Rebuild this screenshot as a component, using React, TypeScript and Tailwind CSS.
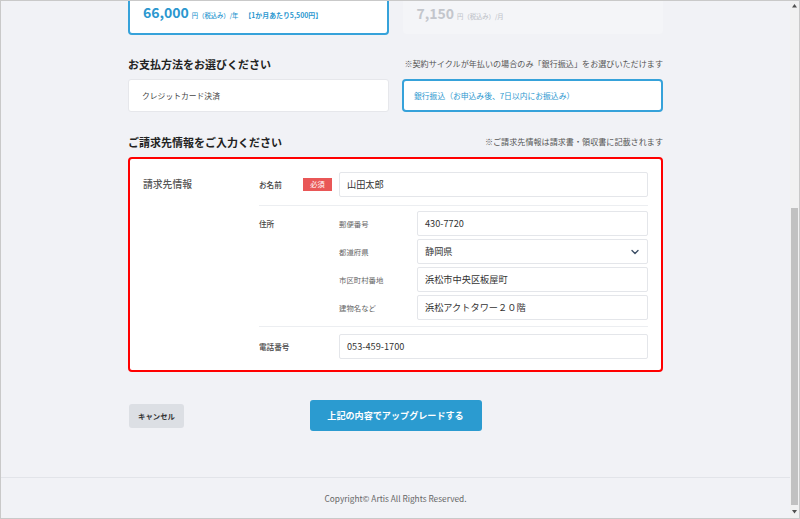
import React from "react";

function Field({ value, children }: { value: string; children?: React.ReactNode }) {
  return (
    <div className="flex-1 h-[25px] flex items-center justify-between border border-[#e4e6ea] rounded-[2px] bg-white pl-[7px] pr-[8px] text-[9.2px] text-[#333] leading-none">
      <span>{value}</span>
      {children}
    </div>
  );
}

function SubRow({ label, value, children }: { label: string; value: string; children?: React.ReactNode }) {
  return (
    <div className="flex items-center">
      <div className="w-[78px] text-[7.4px] text-[#666] leading-none">{label}</div>
      <Field value={value}>{children}</Field>
    </div>
  );
}

export default function App() {
  return (
    <div className="w-[800px] h-[519px] border border-[#c9c9c9] bg-[#f1f2f6] flex overflow-hidden font-['Noto_Sans_CJK_JP',sans-serif]">
      <div className="flex-1 flex flex-col overflow-hidden">
        <div className="w-[535px] mx-auto">
          {/* plan cards */}
          <div className="-mt-[36px] grid grid-cols-2 gap-[14px]">
            <div className="h-[70px] bg-white border-2 border-[#36a2da] rounded-[4px] flex items-end pb-[7px] pl-[13px]">
              <div className="flex items-baseline text-[#2b97cf] leading-[20px]">
                <span className="text-[14px] font-bold">66,000</span>
                <span className="ml-[3px] text-[6.3px] font-medium">円（税込み）/年</span>
                <span className="ml-[6px] text-[6.9px] font-bold">【1か月あたり5,500円】</span>
              </div>
            </div>
            <div className="h-[69px] bg-[#f4f5f8] rounded-[4px] flex items-end pb-[7px] pl-[14px]">
              <div className="flex items-baseline text-[#c3c6cc] leading-[20px]">
                <span className="text-[14px] font-bold">7,150</span>
                <span className="ml-[3px] text-[6.3px] font-medium">円（税込み）/月</span>
              </div>
            </div>
          </div>

          {/* payment heading */}
          <div className="mt-[21px] h-[16px] flex items-center justify-between">
            <div className="text-[11px] font-bold text-[#222] leading-none">お支払方法をお選びください</div>
            <div className="text-[8.1px] text-[#555] leading-none">※契約サイクルが年払いの場合のみ「銀行振込」をお選びいただけます</div>
          </div>

          <div className="mt-[7px] grid grid-cols-2 gap-[13px]">
            <div className="h-[33px] bg-white border border-[#e6e7eb] rounded-[3px] flex items-center pl-[13px] text-[7.8px] text-[#444] leading-none">
              クレジットカード決済
            </div>
            <div className="h-[33px] bg-white border-2 border-[#36a2da] rounded-[4px] flex items-center pl-[10px] text-[7.8px] text-[#2b97cf] leading-none">
              銀行振込（お申込み後、7日以内にお振込み）
            </div>
          </div>

          {/* billing heading */}
          <div className="mt-[22px] h-[16px] flex items-center justify-between">
            <div className="text-[11px] font-bold text-[#222] leading-none">ご請求先情報をご入力ください</div>
            <div className="text-[8.1px] text-[#555] leading-none">※ご請求先情報は請求書・領収書に記載されます</div>
          </div>

          {/* red box */}
          <div className="mt-[7px] bg-white border-2 border-[#f00] rounded-[4px] pt-[13px] pb-[11px] px-[13px] grid grid-cols-[116px_1fr]">
            <div className="h-[25px] flex items-center text-[9.8px] font-medium text-[#555] leading-none">請求先情報</div>
            <div className="flex flex-col">
              {/* name */}
              <div className="flex items-center">
                <div className="w-[80px] pr-[7px] flex items-center justify-between">
                  <span className="text-[7.6px] font-medium text-[#444] leading-none">お名前</span>
                  <span className="w-[29px] h-[13px] bg-[#e95757] text-white text-[7.2px] flex items-center justify-center leading-none">必須</span>
                </div>
                <Field value="山田太郎" />
              </div>

              {/* address */}
              <div className="mt-[8px] pt-[5px] border-t border-[#eceef1] flex">
                <div className="w-[80px] h-[25px] flex items-center text-[7.6px] font-medium text-[#444] leading-none">住所</div>
                <div className="flex-1 flex flex-col gap-[3px]">
                  <SubRow label="郵便番号" value="430-7720" />
                  <SubRow label="都道府県" value="静岡県">
                    <svg width="8" height="6" viewBox="0 0 8 6" fill="none">
                      <path d="M1 1.5 L4 4.5 L7 1.5" stroke="#3d4f66" strokeWidth="1.4" strokeLinecap="round" strokeLinejoin="round" />
                    </svg>
                  </SubRow>
                  <SubRow label="市区町村番地" value="浜松市中央区板屋町" />
                  <SubRow label="建物名など" value="浜松アクトタワー２０階" />
                </div>
              </div>

              {/* phone */}
              <div className="mt-[6px] pt-[7px] border-t border-[#eceef1] flex items-center">
                <div className="w-[80px] text-[7.6px] font-medium text-[#444] leading-none">電話番号</div>
                <Field value="053-459-1700" />
              </div>
            </div>
          </div>

          {/* buttons */}
          <div className="mt-[28px] grid grid-cols-[1fr_auto_1fr] items-center">
            <button className="justify-self-start ml-[1px] w-[55px] h-[24px] bg-[#dcdfe4] rounded-[3px] text-[7.4px] font-bold text-[#333] leading-none">
              キャンセル
            </button>
            <button className="w-[172px] h-[31px] bg-[#2b9bd0] rounded-[3px] text-[9.1px] font-bold text-white leading-none">
              上記の内容でアップグレードする
            </button>
            <div />
          </div>
        </div>

        {/* footer */}
        <div className="mt-auto h-[41px] border-t border-[#e2e4e9] flex items-center justify-center text-[8.3px] text-[#666] leading-none">
          Copyright© Artis All Rights Reserved.
        </div>
      </div>

      {/* scrollbar */}
      <div className="w-[9px] bg-[#f1f1f1] flex flex-col">
        <div className="h-[10px] flex items-center justify-center">
          <svg width="5" height="4" viewBox="0 0 5 4"><path d="M2.5 0 L5 3.5 L0 3.5 Z" fill="#505050" /></svg>
        </div>
        <div className="h-[197px]" />
        <div className="h-[297px] mx-[1px] bg-[#c1c1c1]" />
        <div className="flex-1 flex items-center justify-center">
          <svg width="5" height="4" viewBox="0 0 5 4"><path d="M0 0 L5 0 L2.5 3.5 Z" fill="#505050" /></svg>
        </div>
      </div>
    </div>
  );
}
